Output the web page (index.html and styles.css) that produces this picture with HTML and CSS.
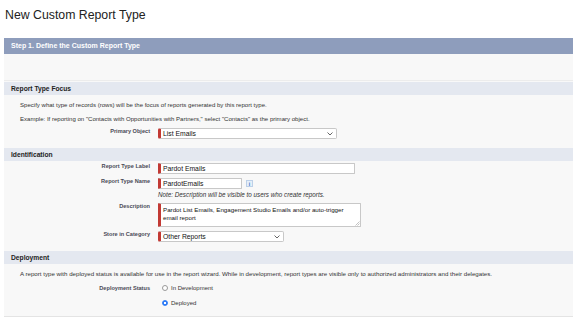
FILE: index.html
```html
<!DOCTYPE html>
<html lang="en">
<head>
    <meta charset="UTF-8">
    <meta name="viewport" content="width=device-width, initial-scale=1.0">
    <title>New Custom Report Type</title>
    <link rel="stylesheet" href="styles.css">
</head>
<body>
    <h1 class="page-title">New Custom Report Type</h1>
    <div class="page-block">
        <div class="block-header">Step 1. Define the Custom Report Type</div>
        <div class="block-top"></div>

        <div class="section">
            <div class="section-header">Report Type Focus</div>
            <p class="section-text">Specify what type of records (rows) will be the focus of reports generated by this report type.</p>
            <p class="section-text">Example: If reporting on "Contacts with Opportunities with Partners," select "Contacts" as the primary object.</p>
            <div class="field-row">
                <div class="field-label">Primary Object</div>
                <div class="field-data">
                    <div class="select-box required primary-select">
                        <span class="select-value">List Emails</span>
                        <svg class="chevron" width="6" height="4" viewBox="0 0 6 4"><polyline points="0.5,0.5 3,3 5.5,0.5" fill="none" stroke="#555" stroke-width="0.9"/></svg>
                    </div>
                </div>
            </div>
        </div>

        <div class="section">
            <div class="section-header">Identification</div>
            <div class="field-row">
                <label class="field-label" for="label">Report Type Label</label>
                <div class="field-data">
                    <input class="text-input required label-input" id="label" type="text" value="Pardot Emails">
                </div>
            </div>
            <div class="field-row">
                <label class="field-label" for="name">Report Type Name</label>
                <div class="field-data">
                    <input class="text-input required name-input" id="name" type="text" value="PardotEmails">
                    <span class="info-icon">i</span>
                </div>
            </div>
            <div class="field-row note-row">
                <div class="field-label"></div>
                <div class="field-data note">Note: Description will be visible to users who create reports.</div>
            </div>
            <div class="field-row">
                <label class="field-label" for="description">Description</label>
                <div class="field-data">
                    <div class="textarea-box">
                        <textarea class="required" id="description">Pardot List Emails, Engagement Studio Emails and/or auto-trigger email report</textarea>
                        <svg class="resizer" width="5" height="5" viewBox="0 0 5 5"><path d="M0.5 4.5 L4.5 0.5 M2.5 4.5 L4.5 2.5" stroke="#999" stroke-width="0.6"/></svg>
                    </div>
                </div>
            </div>
            <div class="field-row">
                <div class="field-label">Store in Category</div>
                <div class="field-data">
                    <div class="select-box required category-select">
                        <span class="select-value">Other Reports</span>
                        <svg class="chevron" width="6" height="4" viewBox="0 0 6 4"><polyline points="0.5,0.5 3,3 5.5,0.5" fill="none" stroke="#555" stroke-width="0.9"/></svg>
                    </div>
                </div>
            </div>
        </div>

        <div class="section last">
            <div class="section-header">Deployment</div>
            <p class="section-text wide-text">A report type with deployed status is available for use in the report wizard. While in development, report types are visible only to authorized administrators and their delegates.</p>
            <div class="field-row radio-row">
                <div class="field-label">Deployment Status</div>
                <label class="field-data radio-option"><span class="radio"></span>In Development</label>
            </div>
            <div class="field-row radio-row">
                <div class="field-label"></div>
                <label class="field-data radio-option"><span class="radio checked"></span>Deployed</label>
            </div>
        </div>
    </div>
</body>
</html>
```

FILE: styles.css
```css
body {
    font-family: "Liberation Sans", Arial, Helvetica, sans-serif;
    background-color: #ffffff;
    color: #333333;
    margin: 0;
    padding: 0;
    overflow: hidden;
}
.page-title {
    margin: 8px 0 0 5px;
    font-size: 12.3px;
    line-height: 15px;
    font-weight: 400;
    color: #222222;
}
.page-block {
    margin: 15px 0 0 4px;
    background-color: #f8f8f8;
}
.block-header {
    height: 16px;
    line-height: 16px;
    padding-left: 7px;
    background-color: #8e9dbc;
    color: #ffffff;
    font-size: 7px;
    font-weight: bold;
}
.block-top {
    height: 26px;
    border-bottom: 1px solid #ececec;
    margin-bottom: 1px;
}
.section {
    padding-bottom: 9px;
}
.section.last {
    padding-bottom: 6px;
    border-bottom: 1px solid #e4e4e4;
}
.section-header {
    height: 13px;
    line-height: 13px;
    padding-left: 7px;
    background-color: #e4e8f0;
    color: #222222;
    font-size: 6.7px;
    font-weight: bold;
}
.section-text {
    margin: 0;
    padding-left: 16px;
    font-size: 6.05px;
    line-height: 14px;
    color: #333333;
    white-space: nowrap;
}
.section-text.wide-text {
    font-size: 6.15px;
}
.section-header + .section-text {
    margin-top: 3px;
}
.field-row {
    display: flex;
    margin-top: 4px;
}
.section-header + .field-row {
    margin-top: 2px;
}
.section-text + .field-row {
    margin-top: 2px;
}
.field-row.note-row {
    margin-top: 1px;
}
.field-row.radio-row {
    margin-top: 0;
}
.field-row.radio-row + .radio-row {
    margin-top: 1px;
}
.field-label {
    width: 146px;
    flex-shrink: 0;
    text-align: right;
    font-size: 5.6px;
    font-weight: bold;
    line-height: 7px;
    color: #4a4a56;
}
.radio-row .field-label {
    line-height: 14px;
}
.field-data {
    margin-left: 8px;
    display: flex;
    align-items: center;
}
.required {
    border-left: 3px solid #c23934 !important;
}
.text-input {
    height: 11px;
    padding: 0 2px;
    background-color: #ffffff;
    border: 1px solid #c8c8c8;
    border-radius: 1px;
    box-sizing: border-box;
    font-family: inherit;
    font-size: 6.8px;
    color: #111111;
    outline: none;
}
.label-input {
    width: 197px;
}
.name-input {
    width: 84px;
}
.info-icon {
    display: inline-flex;
    align-items: center;
    justify-content: center;
    width: 7px;
    height: 7px;
    margin-left: 4px;
    box-sizing: border-box;
    border: 1px solid #bcd0e8;
    background-color: #e5eef9;
    color: #2d6fc2;
    font-size: 5px;
    font-weight: bold;
}
.note {
    font-size: 6.3px;
    font-style: italic;
    line-height: 9px;
    color: #333333;
}
.select-box {
    position: relative;
    display: flex;
    align-items: center;
    height: 11px;
    padding-left: 2px;
    background-color: #ffffff;
    border: 1px solid #c8c8c8;
    border-radius: 2px;
    box-sizing: border-box;
}
.primary-select {
    width: 179px;
}
.category-select {
    width: 126px;
}
.select-value {
    font-size: 6.8px;
    line-height: 9px;
    color: #111111;
}
.chevron {
    position: absolute;
    right: 3px;
    top: 3px;
}
.textarea-box {
    position: relative;
}
.textarea-box textarea {
    display: block;
    width: 203px;
    height: 24px;
    padding: 2px 2px;
    box-sizing: border-box;
    background-color: #ffffff;
    border: 1px solid #c8c8c8;
    border-radius: 1px;
    resize: none;
    overflow: hidden;
    font-family: inherit;
    font-size: 6.2px;
    line-height: 8px;
    color: #111111;
    outline: none;
}
.resizer {
    position: absolute;
    right: 1px;
    bottom: 1px;
}
.radio-option {
    font-size: 6px;
    line-height: 14px;
    color: #333333;
}
.radio {
    display: inline-block;
    width: 6px;
    height: 6px;
    margin: 0 3px 0 4px;
    box-sizing: border-box;
    border: 1px solid #9a9a9a;
    border-radius: 50%;
    background-color: #ffffff;
}
.radio.checked {
    border-color: #2f7cf6;
    background: radial-gradient(circle, #ffffff 0 1px, #2f7cf6 1.4px);
}
```
